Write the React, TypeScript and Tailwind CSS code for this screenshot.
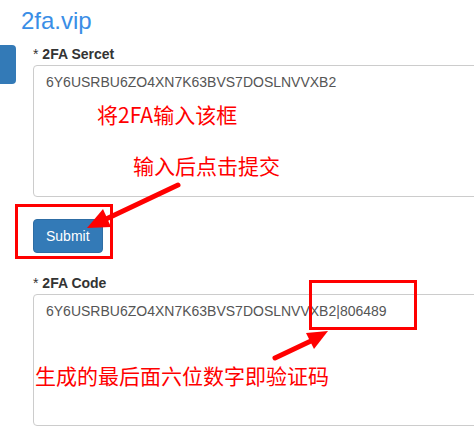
import React from 'react';

const font = { fontFamily: '"Liberation Sans", Arial, sans-serif' };

function Annotations() {
  return (
    <div className="pointer-events-none absolute inset-0 text-[21px] leading-none text-[#ff0000] [font-family:'Noto_Sans_CJK_SC',sans-serif]">
      <div className="absolute left-[97px] top-[104px]">将2FA输入该框</div>
      <div className="absolute left-[133px] top-[155px]">输入后点击提交</div>
      <div className="absolute left-[35px] top-[365px]">生成的最后面六位数字即验证码</div>
      <div className="absolute left-[15px] top-[204px] h-[55px] w-[98px] border-[3px] border-[#ff0000]" />
      <div className="absolute left-[309px] top-[280px] h-[50px] w-[108px] border-[3px] border-[#ff0000]" />
      <svg className="absolute inset-0" width="474" height="426" viewBox="0 0 474 426">
        <line x1="178" y1="185" x2="104" y2="220" stroke="#ff0000" strokeWidth="5" strokeLinecap="round" />
        <polygon points="87,228 111,227 103,209" fill="#ff0000" />
        <line x1="275" y1="358" x2="313" y2="340" stroke="#ff0000" strokeWidth="5" strokeLinecap="round" />
        <polygon points="328,331 314,349 306,333" fill="#ff0000" />
      </svg>
    </div>
  );
}

function Field({ label, value }: { label: string; value: string }) {
  return (
    <div className="flex flex-col gap-[1px]">
      <label className="text-[14px] font-bold leading-[20px] text-[#333]">
        <span className="font-normal">*</span> {label}
      </label>
      <textarea
        readOnly
        defaultValue={value}
        className="h-[132px] w-full resize-none rounded-[4px] border border-[#ccc] px-[12px] py-[6px] text-[14px] leading-[20px] text-[#555] outline-none"
      />
    </div>
  );
}

export default function App() {
  return (
    <div className="relative flex h-[426px] w-[474px] flex-col overflow-hidden bg-white pt-[8px]" style={font}>
      <div className="absolute left-0 top-[45px] h-[39px] w-[16px] rounded-r-[4px] bg-[#337ab7]" />
      <h1 className="pl-[21px] text-[24px] leading-[26px] text-[#3a8ee6]">2fa.vip</h1>
      <div className="flex w-[600px] flex-col items-start pl-[33px] pt-[10px]">
        <div className="w-full">
          <Field label="2FA Sercet" value="6Y6USRBU6ZO4XN7K63BVS7DOSLNVVXB2" />
        </div>
        <button className="mb-[20px] mt-[22px] h-[34px] rounded-[4px] border border-[#2e6da4] bg-[#337ab7] px-[12px] text-[14px] text-white">
          Submit
        </button>
        <div className="w-full">
          <Field label="2FA Code" value="6Y6USRBU6ZO4XN7K63BVS7DOSLNVVXB2|806489" />
        </div>
      </div>
      <Annotations />
    </div>
  );
}
